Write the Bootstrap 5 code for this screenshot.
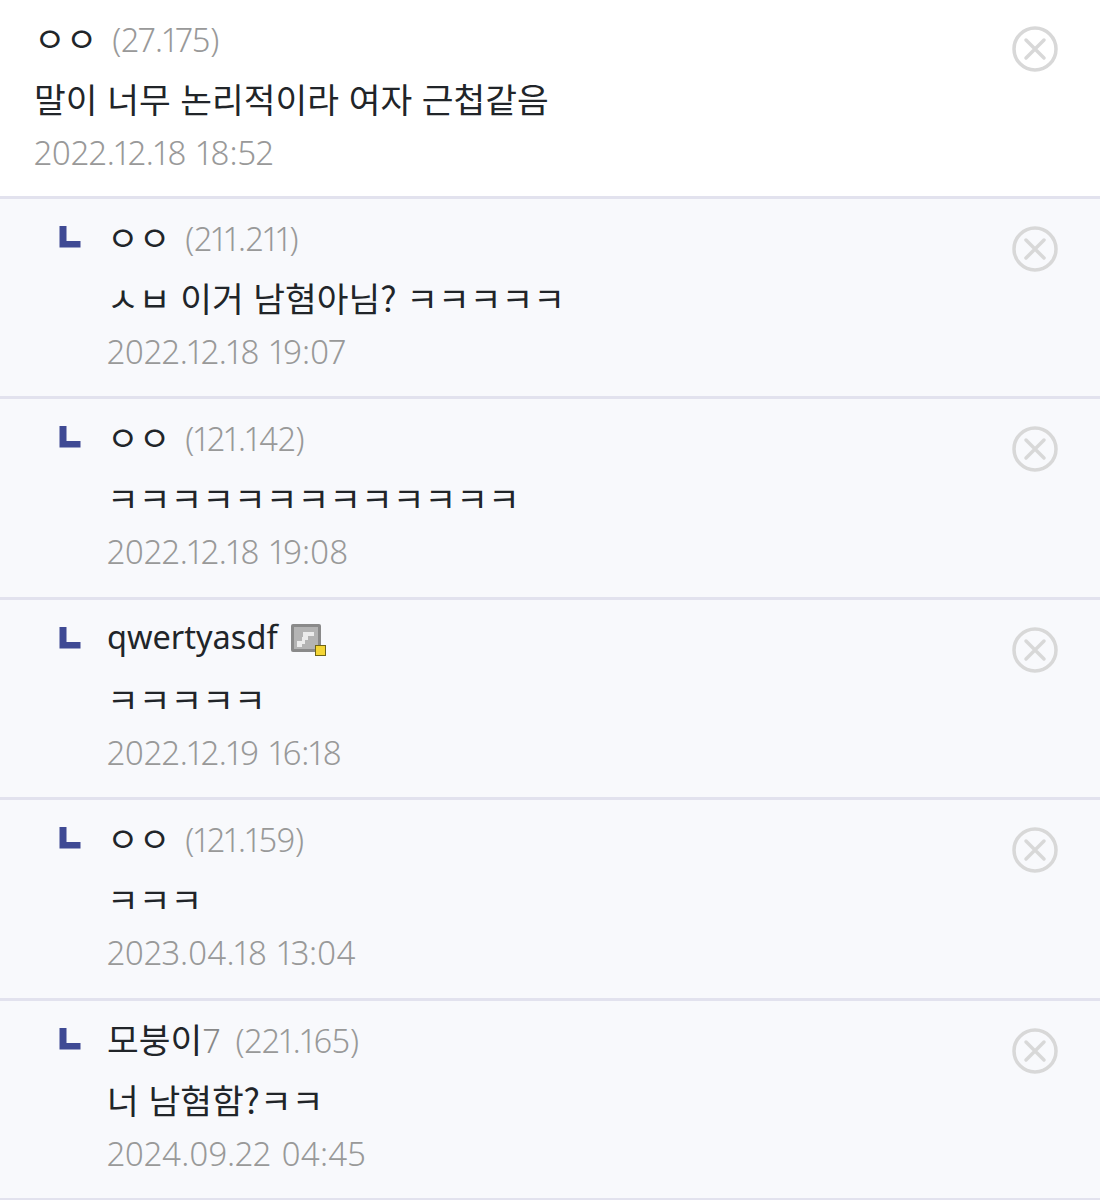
<!DOCTYPE html>
<html lang="ko">

<head>
    <meta charset="UTF-8">
    <meta name="viewport" content="width=device-width, initial-scale=1">
    <title>댓글</title>
    <link href="https://cdn.jsdelivr.net/npm/bootstrap@5.3.0/dist/css/bootstrap.min.css" rel="stylesheet">
    <style>
        body {
            background: #fff;
            font-family: "Noto Sans", "Noto Sans CJK KR", sans-serif;
            color: #111;
        }

        .cmt-row {
            --bs-list-group-border-width: 0;
            height: 200.4px;
            padding: 0 42px 0 34px;
            border-bottom: 3px solid #e2e2ee !important;
            border-radius: 0 !important;
        }

        .cmt-row:first-child {
            height: 199px;
        }

        .cmt-row.is-reply {
            background: #f8f9fc;
            padding-left: 59px;
        }

        .cmt-body {
            padding-top: 11px;
            min-width: 0;
        }

        .cmt-name {
            height: 52px;
            font-size: 34.5px;
            line-height: 52px;
            font-family: "Noto Sans CJK KR", sans-serif;
            font-weight: 400;
            white-space: nowrap;
        }

        .cmt-name.is-latin {
            font-family: "Noto Sans", sans-serif;
            font-size: 32.5px;
        }

        .nick-tail {
            color: #888;
            font-family: "Noto Sans", sans-serif;
            font-size: 32.5px;
            font-weight: 300;
        }

        .cmt-ip {
            margin-left: 5px;
            font-size: 32.5px;
            line-height: 1;
            color: #999;
            font-family: "Noto Sans", sans-serif;
            font-weight: 300;
            font-variant-numeric: proportional-nums;
        }

        .cmt-text {
            height: 67px;
            font-size: 34.5px;
            line-height: 71px;
            font-family: "Noto Sans CJK KR", sans-serif;
            font-weight: 400;
            white-space: nowrap;
        }

        .cmt-date {
            font-size: 33px;
            line-height: 46px;
            color: #999;
            font-weight: 300;
            font-variant-numeric: proportional-nums;
            word-spacing: 2px;
        }

        .reply-mark {
            width: 48px;
            padding-top: 27px;
        }

        .del-btn {
            width: 46px;
            height: 46px;
            margin-top: 26px;
            padding: 0;
            border: 0;
            background: none;
        }

        .is-reply .del-btn {
            margin-top: 27px;
        }

        .gall-icon {
            margin-left: 4px;
            vertical-align: -8px;
        }
    </style>
</head>

<body>
    <div class="list-group list-group-flush" id="comments"></div>

    <script>
        // [nick, nick tail in grey, ip, text, date, is reply, nick has gallery icon]
        const comments = [
            ['ㅇㅇ', '', '(27.175)', '말이 너무 논리적이라 여자 근첩같음', '2022.12.18 18:52', false, false],
            ['ㅇㅇ', '', '(211.211)', 'ㅅㅂ 이거 남혐아님? ㅋㅋㅋㅋㅋ', '2022.12.18 19:07', true, false],
            ['ㅇㅇ', '', '(121.142)', 'ㅋㅋㅋㅋㅋㅋㅋㅋㅋㅋㅋㅋㅋ', '2022.12.18 19:08', true, false],
            ['qwertyasdf', '', '', 'ㅋㅋㅋㅋㅋ', '2022.12.19 16:18', true, true],
            ['ㅇㅇ', '', '(121.159)', 'ㅋㅋㅋ', '2023.04.18 13:04', true, false],
            ['모붕이', '7', '(221.165)', '너 남혐함?ㅋㅋ', '2024.09.22 04:45', true, false]
        ];

        const replyMark = `<div class="reply-mark flex-shrink-0"><svg width="22" height="22" viewBox="0 0 22 22" class="d-block"><path d="M0.500 0h7v15h14v6.500H0.500z" fill="#3f4a94"/></svg></div>`;

        const delIcon = `<button type="button" class="del-btn flex-shrink-0" aria-label="삭제"><svg width="46" height="46" viewBox="0 0 46 46" class="d-block"><circle cx="23" cy="23" r="21" fill="none" stroke="#d8d8d8" stroke-width="3.5"/><path d="M14 14l18 18M32 14L14 32" stroke="#d8d8d8" stroke-width="3.5" stroke-linecap="round"/></svg></button>`;

        const gallIcon = `<svg width="37" height="34" viewBox="0 0 37 34" class="gall-icon"><rect x="1" y="1" width="30" height="28" rx="2" fill="#8a8a8a"/><rect x="4" y="4" width="24" height="22" fill="#b4b4b4"/><path d="M13 9h11v4h-6v4h-3v4h-3v3H7v-6h5v-4h1z" fill="#ececec"/><rect x="25.500" y="22.500" width="10" height="10" fill="#f4d535" stroke="#6f6416"/></svg>`;

        document.getElementById('comments').innerHTML = comments.map(([nick, tail, ip, text, date, reply, gall]) => `
            <div class="list-group-item d-flex cmt-row ${reply ? 'is-reply' : ''}">
                ${reply ? replyMark : ''}
                <div class="cmt-body flex-grow-1">
                    <div class="cmt-name ${gall ? 'is-latin' : ''}">${nick}${tail ? `<span class="nick-tail">${tail}</span>` : ''}${ip ? ` <span class="cmt-ip">${ip}</span>` : ''}${gall ? ` ${gallIcon}` : ''}</div>
                    <div class="cmt-text">${text}</div>
                    <div class="cmt-date">${date}</div>
                </div>
                ${delIcon}
            </div>`).join('');
    </script>
    <script src="https://cdn.jsdelivr.net/npm/bootstrap@5.3.0/dist/js/bootstrap.bundle.min.js"></script>
</body>

</html>
